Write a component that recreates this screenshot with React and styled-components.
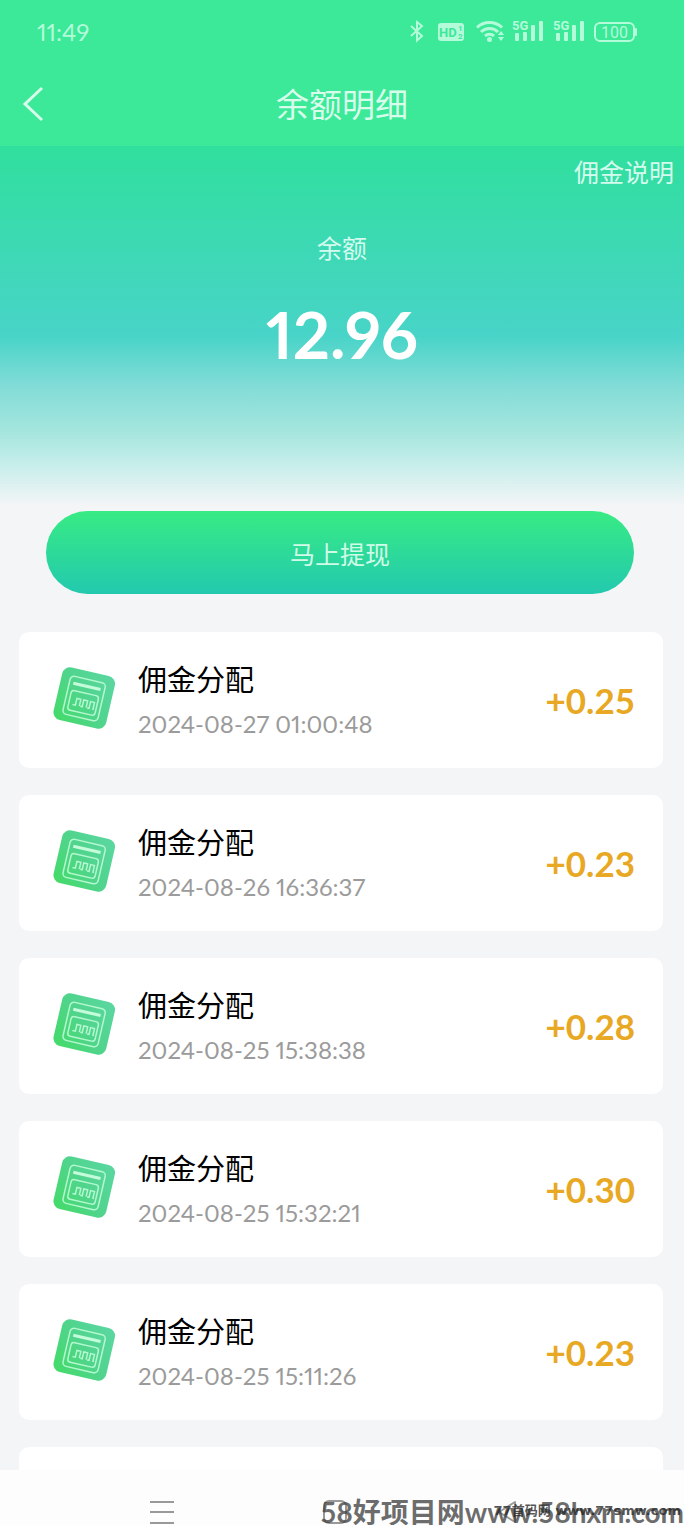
import React from 'react'
import styled, { createGlobalStyle } from 'styled-components'

const GlobalStyle = createGlobalStyle`
  * {
    box-sizing: border-box;
  }
  body {
    margin: 0;
    background: #f4f5f7;
    font-family: Lato, 'Noto Sans CJK SC', sans-serif;
  }
  h1, h2, p, ul {
    margin: 0;
    padding: 0;
    font-weight: 400;
  }
`

const Screen = styled.div`
  position: relative;
  height: 100vh;
  display: flex;
  flex-direction: column;
  overflow: hidden;
`

const Header = styled.header`
  background: #3be998;
  color: #fff;
`

const StatusBar = styled.div`
  height: 64px;
  padding: 0 47px 0 37px;
  display: flex;
  align-items: center;
  justify-content: space-between;
  color: #b4fbda;
`

const Clock = styled.time`
  font-size: 24px;
  line-height: 24px;
  font-variant-numeric: proportional-nums;
`

const StatusIcons = styled.svg`
  width: 230px;
  height: 28px;
  fill: currentColor;
  font-family: Roboto, sans-serif;
  font-weight: 700;
`

const TitleBar = styled.div`
  height: 82px;
  padding: 0 20px 4px;
  display: grid;
  grid-template-columns: 40px 1fr 40px;
  align-items: center;
`

const BackButton = styled.button`
  width: 40px;
  height: 40px;
  padding: 0;
  border: 0;
  background: none;
  color: #d8fdeb;

  svg {
    display: block;
  }
`

const Title = styled.h1`
  text-align: center;
  font-family: 'Noto Sans CJK SC', sans-serif;
  font-size: 33px;
  line-height: 40px;
  color: #d8fdeb;
`

const Hero = styled.section`
  padding: 8px 10px 0;
  height: 365px;
  flex-shrink: 0;
  display: flex;
  flex-direction: column;
  align-items: center;
  color: #fff;
  background: linear-gradient(#30df9d 0px, #48d4c8 190px, #82dcd7 240px, #a5e6de 286px, #c8eeeb 320px, #f4f5f7 360px);
`

const RuleLink = styled.a`
  align-self: flex-end;
  font-size: 25px;
  line-height: 36px;
  color: #d4fbee;
  text-decoration: none;
`

const BalanceLabel = styled.p`
  margin-top: 40px;
  font-size: 25px;
  line-height: 36px;
  color: #d4fbee;
`

const Balance = styled.p`
  margin-top: 28px;
  font-size: 65px;
  line-height: 80px;
  font-weight: 700;
  font-variant-numeric: proportional-nums;
`

const WithdrawButton = styled.button`
  margin: 0 50px 38px 46px;
  height: 83px;
  flex-shrink: 0;
  border: 0;
  border-radius: 42px;
  background: linear-gradient(#38eb84, #23c9ae);
  color: #d0fbe8;
  font-family: 'Noto Sans CJK SC', sans-serif;
  font-size: 25px;
`

const RecordList = styled.ul`
  flex: 1;
  min-height: 0;
  overflow: hidden;
  padding: 0 21px 0 19px;
  display: flex;
  flex-direction: column;
  gap: 27px;
  list-style: none;
`

const Record = styled.li`
  min-height: 136px;
  flex-shrink: 0;
  padding: 0 28px 0 31px;
  display: flex;
  align-items: center;
  border-radius: 10px;
  background: #fff;
`

const RecordText = styled.div`
  flex: 1;
  margin-left: 20px;
  padding-top: 4px;
`

const RecordName = styled.h2`
  font-size: 29px;
  line-height: 44px;
  color: #000;
`

const RecordTime = styled.time`
  display: block;
  font-size: 24px;
  line-height: 44px;
  color: #9b9b9b;
  font-variant-numeric: proportional-nums;
`

const Amount = styled.strong`
  font-size: 35px;
  line-height: 44px;
  color: #e8a823;
`

const SystemNav = styled.nav`
  height: 55px;
  flex-shrink: 0;
  padding: 25px 96px 0 82px;
  display: flex;
  justify-content: space-between;
  background: #fdfdfe;
`

const NavButton = styled.button`
  width: 160px;
  height: 30px;
  padding: 0;
  border: 0;
  background: none;
  color: #999;

  svg {
    display: block;
    margin: 0 auto;
  }
`

const Watermark = styled.p`
  position: absolute;
  right: 0;
  bottom: 0;
  white-space: nowrap;
  font-family: Lato, 'Noto Sans CJK SC', sans-serif;
  font-size: 28px;
  line-height: 26px;
  font-weight: 700;
  color: rgba(60, 60, 60, 0.75);
`

const SmallWatermark = styled(Watermark)`
  right: 3px;
  bottom: 4px;
  font-family: 'DejaVu Sans', 'Noto Sans CJK SC', sans-serif;
  font-size: 13px;
  line-height: 20px;
  color: rgba(40, 40, 40, 0.8);
`

const records = [
  { time: '2024-08-27 01:00:48', amount: '+0.25' },
  { time: '2024-08-26 16:36:37', amount: '+0.23' },
  { time: '2024-08-25 15:38:38', amount: '+0.28' },
  { time: '2024-08-25 15:32:21', amount: '+0.30' },
  { time: '2024-08-25 15:11:26', amount: '+0.23' },
]

function Signal({ x }) {
  return (
    <g transform={`translate(${x} 0)`}>
      <text x="-1" y="12" fontSize="13">5G</text>
      <rect x="2" y="15" width="4" height="8" rx="1" />
      <rect x="10" y="14" width="4" height="9" rx="1" />
      <rect x="18" y="7" width="4" height="16" rx="1" />
      <rect x="26" y="3" width="4" height="20" rx="1" />
    </g>
  )
}

function StatusIconRow() {
  return (
    <StatusIcons viewBox="0 0 230 28" aria-hidden="true">
      <path d="M4 8l11 10-5 4.500V4l5 4-11 10" fill="none" stroke="currentColor" strokeWidth="2" />
      <rect x="31" y="5" width="26" height="18" rx="3" />
      <g fill="#3be998">
        <text x="32" y="19" fontSize="13">HD</text>
        <text x="51" y="13" fontSize="8">1</text>
        <text x="51" y="21" fontSize="8">2</text>
      </g>
      <g fill="none" stroke="currentColor" strokeWidth="3">
        <path d="M70 9.500a18 18 0 0 1 25 0" />
        <path d="M74 14a12 12 0 0 1 17 0" />
        <path d="M78 18a7 7 0 0 1 9 0" />
      </g>
      <circle cx="82.500" cy="21.500" r="2.500" />
      <path d="M91 17l3-4 3 4zM91 19l3 4 3-4z" />
      <Signal x="106" />
      <Signal x="147" />
      <rect x="188" y="5" width="39" height="18" rx="5" fill="none" stroke="currentColor" strokeWidth="2" />
      <rect x="228" y="10" width="2" height="8" rx="1" />
      <text x="207.500" y="20" fontSize="16" fontWeight="400" textAnchor="middle">100</text>
    </StatusIcons>
  )
}

function RecordIcon() {
  return (
    <svg width="68" height="68" viewBox="0 0 68 68" aria-hidden="true">
      <defs>
        <linearGradient id="tile" x1="1" y1="0" x2="0" y2="1">
          <stop offset="0" stopColor="#5bd7a2" />
          <stop offset="0.500" stopColor="#50d48c" />
          <stop offset="1" stopColor="#43db66" />
        </linearGradient>
      </defs>
      <g transform="rotate(13 34 33)">
        <rect x="7" y="5" width="54" height="54" rx="8" fill="url(#tile)" />
        <g fill="none" stroke="#b4f8cf" strokeWidth="1.500">
          <rect x="16" y="13" width="36" height="39" rx="4" />
          <rect x="20" y="27" width="28" height="20" rx="3" />
          <path d="M24 41h3v-7h4v7M32 41h2v-7h4v7M39 41h2v-7h4v7h1" />
        </g>
        <path d="M20 20h28" stroke="#c4fbda" strokeWidth="3" />
      </g>
    </svg>
  )
}

export default function App() {
  return (
    <>
      <GlobalStyle />
      <Screen>
        <Header>
          <StatusBar>
            <Clock>11:49</Clock>
            <StatusIconRow />
          </StatusBar>
          <TitleBar>
            <BackButton aria-label="返回">
              <svg width="40" height="40" viewBox="0 0 40 40" fill="none" stroke="currentColor" strokeWidth="3">
                <path d="M22 5L5 21L22 37" />
              </svg>
            </BackButton>
            <Title>余额明细</Title>
          </TitleBar>
        </Header>
        <Hero>
          <RuleLink href="#rules">佣金说明</RuleLink>
          <BalanceLabel>余额</BalanceLabel>
          <Balance>12.96</Balance>
        </Hero>
        <WithdrawButton>马上提现</WithdrawButton>
        <RecordList>
          {records.map((record) => (
            <Record key={record.time}>
              <RecordIcon />
              <RecordText>
                <RecordName>佣金分配</RecordName>
                <RecordTime>{record.time}</RecordTime>
              </RecordText>
              <Amount>{record.amount}</Amount>
            </Record>
          ))}
          <Record aria-hidden="true" />
        </RecordList>
        <SystemNav>
          <NavButton aria-label="菜单">
            <svg width="24" height="30" viewBox="0 0 24 30" stroke="currentColor" strokeWidth="2">
              <path d="M0 7h24M0 17h24M0 28h24" />
            </svg>
          </NavButton>
          <NavButton aria-label="主页">
            <svg width="24" height="30" viewBox="0 0 24 30" fill="none" stroke="currentColor" strokeWidth="2">
              <rect x="1" y="6" width="22" height="22" rx="5" />
            </svg>
          </NavButton>
          <NavButton aria-label="后退">
            <svg width="24" height="30" viewBox="0 0 24 30" fill="none" stroke="currentColor" strokeWidth="2">
              <path d="M19 7v20L3 17z" strokeLinejoin="round" />
            </svg>
          </NavButton>
        </SystemNav>
        <Watermark>58好项目网www.58hxm.com</Watermark>
        <SmallWatermark>77首码网 www.77smw.com</SmallWatermark>
      </Screen>
    </>
  )
}
